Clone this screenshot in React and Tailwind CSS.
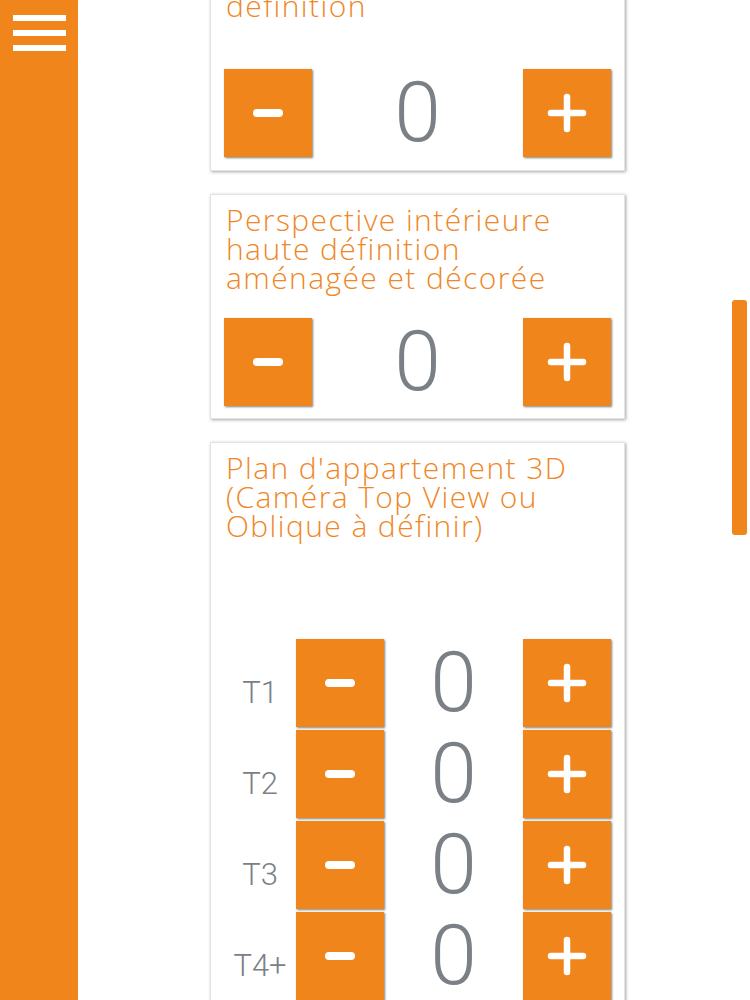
import React, { useState } from "react";

const TITLE_FONT = { fontFamily: '"Open Sans", "Liberation Sans", sans-serif' };
const NUM_FONT = { fontFamily: 'Roboto, "Liberation Sans", sans-serif' };

const MinusIcon = () => (
  <svg width="34" height="12" viewBox="0 0 34 12">
    <line x1="6" y1="6" x2="28" y2="6" stroke="#fff" strokeWidth="8" strokeLinecap="round" />
  </svg>
);

const PlusIcon = () => (
  <svg width="40" height="40" viewBox="0 0 40 40">
    <line x1="4" y1="20" x2="36" y2="20" stroke="#fff" strokeWidth="6.5" strokeLinecap="round" />
    <line x1="20" y1="4" x2="20" y2="36" stroke="#fff" strokeWidth="6.5" strokeLinecap="round" />
  </svg>
);

const StepButton = ({ children, onClick }) => (
  <button
    onClick={onClick}
    className="flex h-[88px] w-[88px] shrink-0 items-center justify-center bg-[#f0851b] shadow-[1px_1px_2px_rgba(0,0,0,0.5)]"
  >
    {children}
  </button>
);

const Counter = ({ value, onChange }) => (
  <div className="flex flex-1 items-center">
    <StepButton onClick={() => onChange(Math.max(0, value - 1))}>
      <MinusIcon />
    </StepButton>
    <div
      className="flex-1 text-center text-[84px] font-light leading-none text-[#7b8087]"
      style={NUM_FONT}
    >
      {value}
    </div>
    <StepButton onClick={() => onChange(value + 1)}>
      <PlusIcon />
    </StepButton>
  </div>
);

const CardTitle = ({ lines, className }) => (
  <h2
    className={
      "pl-[2px] text-[30px] font-light leading-[29px] tracking-[1.4px] text-[#ef8726] " + className
    }
    style={TITLE_FONT}
  >
    {lines.map((line) => (
      <span key={line} className="block whitespace-nowrap">
        {line}
      </span>
    ))}
  </h2>
);

const Card = ({ children, className = "" }) => (
  <div
    className={
      "w-[415px] border border-[#e3e3e3] bg-white px-[13px] pt-[10px] shadow-[1px_1px_3px_rgba(0,0,0,0.35)] " +
      className
    }
  >
    {children}
  </div>
);

const App = () => {
  const [counts, setCounts] = useState({ ext: 0, int: 0, T1: 0, T2: 0, T3: 0, "T4+": 0 });
  const set = (key) => (v) => setCounts((c) => ({ ...c, [key]: v }));

  return (
    <div className="relative flex h-[1000px] w-[750px] overflow-hidden bg-white">
      <aside className="flex h-[1000px] w-[78px] shrink-0 flex-col gap-[9px] bg-[#f0851b] pl-[13px] pt-[15px]">
        <span className="block h-[6px] w-[53px] bg-white" />
        <span className="block h-[6px] w-[53px] bg-white" />
        <span className="block h-[6px] w-[53px] bg-white" />
      </aside>

      <main className="flex flex-1 flex-col gap-[23px] pl-[132px]">
        <Card className="mt-[-78px] pb-[13px]">
          <CardTitle lines={["Perspective extérieure", "haute", "définition"]} className="mb-[49px]" />
          <Counter value={counts.ext} onChange={set("ext")} />
        </Card>

        <Card className="pb-[12px]">
          <CardTitle
            lines={["Perspective intérieure", "haute définition", "aménagée et décorée"]}
            className="mb-[26px]"
          />
          <Counter value={counts.int} onChange={set("int")} />
        </Card>

        <Card className="pb-[13px]">
          <CardTitle
            lines={["Plan d'appartement 3D", "(Caméra Top View ou", "Oblique à définir)"]}
            className="mb-[99px]"
          />
          <div className="flex flex-col gap-[3px]">
            {["T1", "T2", "T3", "T4+"].map((t) => (
              <div key={t} className="flex items-center">
                <span
                  className="w-[72px] shrink-0 pt-[18px] text-center text-[31px] font-light leading-none text-[#7b8087]"
                  style={NUM_FONT}
                >
                  {t}
                </span>
                <Counter value={counts[t]} onChange={set(t)} />
              </div>
            ))}
          </div>
        </Card>
      </main>

      <div className="absolute right-[3px] top-[300px] h-[235px] w-[15px] rounded-[3px] bg-[#f0851b]" />
    </div>
  );
};

export default App;
